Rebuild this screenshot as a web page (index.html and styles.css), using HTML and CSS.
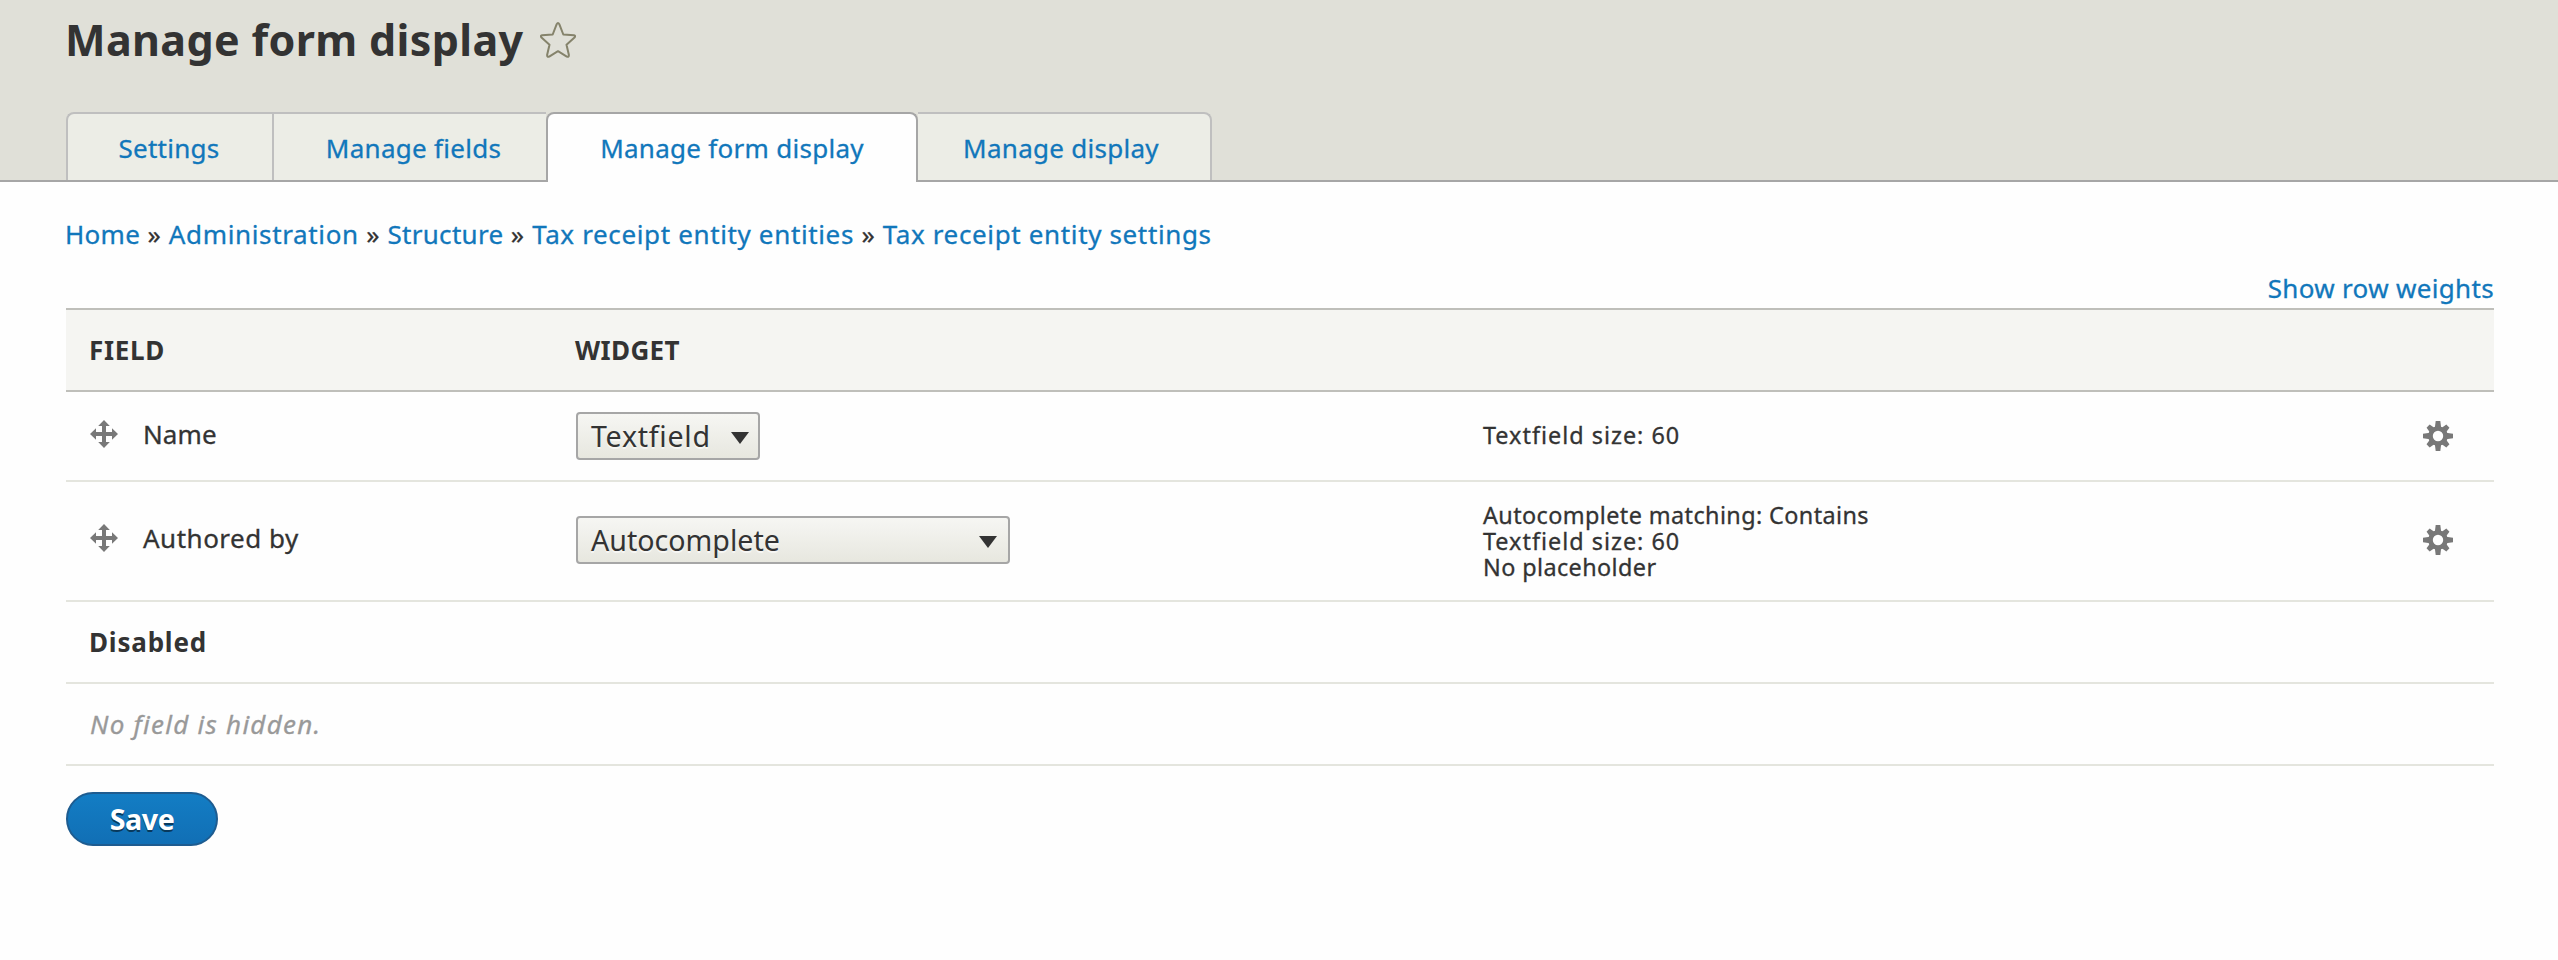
FILE: index.html
```html
<!DOCTYPE html>
<html lang="en">
<head>
<meta charset="utf-8">
<title>Manage form display</title>
<link rel="stylesheet" href="styles.css">
</head>
<body>
<svg class="defs" aria-hidden="true">
  <symbol id="move" viewBox="0 0 28 28">
    <path d="M14 0l5.8 6H16v6h6V8.200l6 5.800-6 5.800V16h-6v6h3.800L14 28l-5.800-6H12v-6H6v3.800L0 14l6-5.800V12h6V6H8.200z"/>
  </symbol>
  <symbol id="gear" viewBox="-15 -15 30 30">
    <g>
      <path d="M-2.300-15H2.300L3.200-8H-3.200z"/>
      <path d="M-2.300 15H2.300L3.200 8H-3.200z"/>
      <path d="M-15-2.300V2.300L-8 3.200V-3.200z"/>
      <path d="M15-2.300V2.300L8 3.200V-3.200z"/>
    </g>
    <g transform="rotate(45)">
      <path d="M-2.200-14H2.200L3.200-8H-3.200z"/>
      <path d="M-2.200 14H2.200L3.200 8H-3.200z"/>
      <path d="M-14-2.200V2.200L-8 3.200V-3.200z"/>
      <path d="M14-2.200V2.200L8 3.200V-3.200z"/>
    </g>
    <circle r="7.500" fill="none" stroke="#787878" stroke-width="4.600"/>
  </symbol>
</svg>
<header class="header">
  <div class="title-row">
    <h1 class="title">Manage form display</h1>
    <svg class="star" viewBox="0 0 36 36"><path d="M16.700 2.200Q18 0 19.300 2.200L23.300 12.500L34 13.300Q36 13.800 34.500 15.600L26.500 22.700L28.900 33Q28.900 35.500 26.800 34.600L18 29.200L9.200 34.600Q7.100 35.500 7.100 33L9.500 22.700L1.500 15.600Q0 13.800 2 13.300L12.700 12.500Z"/></svg>
  </div>
  <nav class="tabs">
    <a class="tab tab-settings">Settings</a>
    <a class="tab tab-fields">Manage fields</a>
    <a class="tab tab-form active">Manage form display</a>
    <a class="tab tab-display">Manage display</a>
  </nav>
</header>
<main class="main">
  <nav class="breadcrumb"><a class="tight">Home</a> <span>»</span> <a>Administration</a> <span>»</span> <a class="tight">Structure</a> <span>»</span> <a>Tax receipt entity entities</a> <span>»</span> <a>Tax receipt entity settings</a></nav>
  <div class="weights"><a>Show row weights</a></div>
  <section class="table">
    <div class="row head">
      <span class="field-head">FIELD</span><span class="widget-head">WIDGET</span>
    </div>
    <div class="row name-row">
      <div class="field"><svg class="move"><use href="#move"/></svg><span class="name">Name</span></div>
      <div><div class="select select-text"><span>Textfield</span><svg class="arrow" viewBox="0 0 18 12"><path d="M0 0h18L9 12z"/></svg></div></div>
      <div class="summary single wide">Textfield size: 60</div>
      <svg class="gear"><use href="#gear"/></svg>
    </div>
    <div class="row author-row">
      <div class="field"><svg class="move"><use href="#move"/></svg><span>Authored by</span></div>
      <div><div class="select select-auto"><span>Autocomplete</span><svg class="arrow" viewBox="0 0 18 12"><path d="M0 0h18L9 12z"/></svg></div></div>
      <div class="summary multi"><div>Autocomplete matching: Contains</div><div class="wide">Textfield size: 60</div><div>No placeholder</div></div>
      <svg class="gear"><use href="#gear"/></svg>
    </div>
    <div class="row region"><strong>Disabled</strong></div>
    <div class="row region"><em>No field is hidden.</em></div>
  </section>
  <button class="save" type="button">Save</button>
</main>
</body>
</html>
```
FILE: styles.css
```css
* { box-sizing: border-box; }
body {
  margin: 0;
  background: #fefefe;
  color: #333;
  font: 26px/36px "Noto Sans", "Open Sans", sans-serif;
  white-space: nowrap;
  -webkit-text-stroke: .3px;
}
.defs { position: absolute; width: 0; height: 0; }
a { color: #1177bb; }

.header {
  display: flex;
  flex-direction: column;
  justify-content: space-between;
  height: 182px;
  padding: 14px 64px 0 66px;
  background: #e0e0d8;
  border-bottom: 2px solid #a6a6a6;
}
.title-row { display: flex; gap: 17px; }
.title { margin: 0 0 0 -1px; font-size: 43px; line-height: 52px; font-weight: 700; letter-spacing: .35px; -webkit-text-stroke: 0; }
.star { width: 36px; height: 36px; margin-top: 8px; fill: none; stroke: #85836b; stroke-width: 2; stroke-linejoin: round; }

.tabs { display: flex; height: 70px; margin-bottom: -2px; }
.tab {
  height: 68px;
  padding-top: 16px;
  border: 2px solid #bfbfbf;
  border-width: 2px 0 0 2px;
  background: #ecede6;
  text-align: center;
  letter-spacing: .28px;
}
.tab-settings { width: 206px; padding-right: 2px; border-top-left-radius: 8px; }
.tab-fields { width: 274px; padding-left: 7px; }
.tab-form { width: 372px; }
.tab-display { width: 294px; padding-right: 6px; border-width: 2px 2px 0 0; border-top-right-radius: 8px; }
.active { height: 70px; border: 2px solid #a6a6a6; border-bottom: 0; border-radius: 8px 8px 0 0; background: #fefefe; }

.main { padding: 34px 64px 0 66px; }
.breadcrumb { margin-left: -1px; letter-spacing: .64px; }
.tight { letter-spacing: .3px; }
.weights { margin: 18px 0 2px; text-align: right; letter-spacing: .33px; }

.table { display: flex; flex-direction: column; border-top: 2px solid #bfbfba; }
.row {
  display: grid;
  grid-template-columns: 486px 907px 1fr 30px;
  align-items: center;
  padding: 0 41px 0 24px;
  border-bottom: 2px solid #e4e5de;
}
.head { height: 82px; background: #f5f5f2; border-color: #bfbfba; font-weight: 700; -webkit-text-stroke: 0; }
.field-head { margin-left: -1px; letter-spacing: .7px; }
.widget-head { margin-left: -1px; letter-spacing: .37px; }
.name-row { height: 90px; }
.author-row { height: 120px; padding-bottom: 2px; }
.region { height: 82px; }
.region strong { margin-left: -1px; letter-spacing: .8px; -webkit-text-stroke: 0; }
.region em { color: #999; letter-spacing: 1.26px; }

.field { display: flex; align-items: center; gap: 25px; padding-bottom: 4px; letter-spacing: .5px; }
.name { letter-spacing: .11px; }
.move { width: 28px; height: 28px; fill: #787878; }
.gear { width: 30px; height: 30px; fill: #787878; }

.select {
  display: flex;
  align-items: center;
  justify-content: space-between;
  height: 48px;
  padding: 0 10px 0 13px;
  border: 2px solid #a6a6a6;
  border-radius: 4px;
  background: linear-gradient(#f6f6f3, #e7e7df);
  font-size: 28.6px;
  text-shadow: 0 2px rgba(255, 255, 255, .6);
  -webkit-text-stroke: 0;
}
.select-text { width: 184px; padding-right: 9px; letter-spacing: .72px; }
.select-auto { width: 434px; padding-right: 11px; letter-spacing: 0; }
.arrow { width: 18px; height: 12px; margin-top: 3px; fill: #333; }

.summary { font-size: 23.4px; line-height: 26px; letter-spacing: .4px; }
.single { padding-bottom: 2px; }
.multi { padding-top: 2px; }
.wide { letter-spacing: 1px; }

.save {
  display: block;
  width: 152px;
  height: 54px;
  margin-top: 26px;
  padding: 0;
  border: 2px solid #1e5c90;
  border-radius: 27px;
  background: linear-gradient(#137dc4, #116fb5);
  color: #fff;
  font: 700 28.6px/50px "Noto Sans", "Open Sans", sans-serif;
  letter-spacing: -.4px;
  text-shadow: 0 2px rgba(0, 0, 0, .5);
  -webkit-text-stroke: 0;
}
```
